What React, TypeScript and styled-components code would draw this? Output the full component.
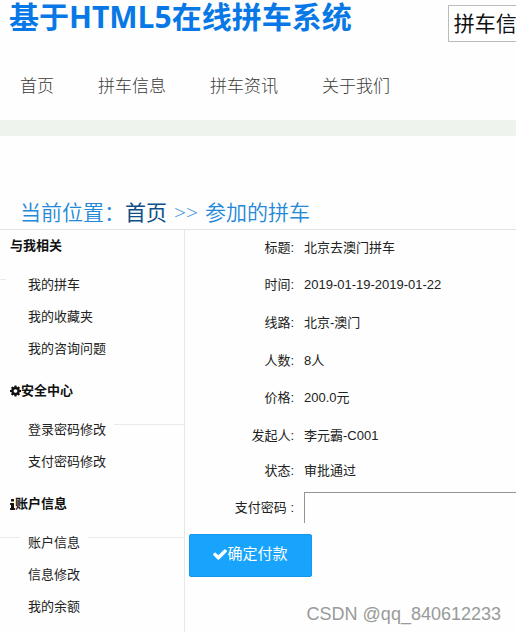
import React from "react";
import styled, { createGlobalStyle } from "styled-components";

const PAGE = "#fdfefd";

const GlobalStyle = createGlobalStyle`
  * { box-sizing: border-box; }
  body {
    margin: 0;
    background: ${PAGE};
    color: #222;
    font: 13px/20px "Liberation Sans", "Noto Sans CJK SC", sans-serif;
    overflow: hidden;
  }
  ul { list-style: none; margin: 0; padding: 0; }
  a { color: inherit; text-decoration: none; }
`;

const Page = styled.div`
  position: relative;
  min-height: 100vh;
  overflow: hidden;
  display: flex;
  flex-direction: column;
`;

const Header = styled.header`
  display: flex;
  align-items: flex-start;
  gap: 96px;
  height: 64px;
  padding-left: 9px;
`;

const Brand = styled.h1`
  flex: none;
  margin: 0;
  color: #0778e6;
  font: bold 30px/34px "Open Sans", "Noto Sans CJK SC", sans-serif;
`;

const SearchKind = styled.select`
  flex: none;
  appearance: none;
  height: 37px;
  margin-top: 5px;
  padding: 0 28px 0 5px;
  border: 1px solid #b9bdb9;
  border-radius: 0;
  background: #fff;
  color: #111;
  font: 21px/32px "Liberation Sans", "Noto Sans CJK SC", sans-serif;
`;

const Nav = styled.nav`
  display: flex;
  gap: 44px;
  height: 56px;
  padding: 10px 20px 0;
  color: #3a3a3a;
  font: 300 17px/26px "Liberation Sans", "Noto Sans CJK SC", sans-serif;
  white-space: nowrap;
`;

const Band = styled.div`
  height: 16px;
  background: #eef3ed;
`;

const Breadcrumb = styled.nav`
  display: flex;
  align-items: center;
  gap: 7px;
  margin-top: 62px;
  padding: 0 20px 2px;
  height: 32px;
  border-bottom: 1px solid #dfe5e2;
  color: #2488d8;
  font: 350 21px/29px "Open Sans", "Noto Sans CJK SC", sans-serif;
  white-space: nowrap;
`;

const Crumb = styled.a`
  color: #0d4f86;
  font-weight: 400;
`;

const Columns = styled.div`
  flex: 1;
  display: grid;
  grid-template-columns: 185px 1fr;
`;

const Sidebar = styled.aside`
  border-right: 1px solid #e6eae7;
`;

const Group = styled.section`
  padding-bottom: 10px;
`;

const GroupTitle = styled.h2`
  display: flex;
  align-items: center;
  height: 32px;
  margin: 0 0 7px;
  padding-left: 10px;
  color: #111;
  font-size: 13px;
  font-weight: bold;
`;

const MenuItem = styled.li<{ $rule?: string }>`
  height: 32px;
  padding-left: 20px;
  background: ${(p) => (p.$rule ? `${p.$rule} 0 10px / 100% 1px no-repeat` : "none")};
`;

const MenuLink = styled.a`
  display: inline-block;
  padding: 6px 8px;
  background: ${PAGE};
`;

const Main = styled.main`
  min-width: 0;
`;

const Details = styled.table`
  width: 100%;
  border-collapse: collapse;
`;

const Row = styled.tr<{ $height: number }>`
  height: ${(p) => p.$height}px;
`;

const Term = styled.th`
  width: 109px;
  padding: 0;
  font-weight: normal;
  text-align: right;
  white-space: nowrap;
`;

const Value = styled.td`
  padding: 0 0 0 10px;
`;

const Password = styled.input`
  display: block;
  width: 100%;
  height: 31px;
  padding: 0 6px;
  border: solid #8f9591;
  border-width: 1px 0 0 1px;
  background: transparent;
  font: inherit;
`;

const PayButton = styled.button`
  display: flex;
  align-items: center;
  justify-content: center;
  width: 123px;
  height: 43px;
  margin: 6px 0 0 4px;
  padding: 0 0 3px;
  border: 1px solid #1597ec;
  border-radius: 2px;
  background: #18a4fd;
  color: #fff;
  font: 15px/20px "Liberation Sans", "Noto Sans CJK SC", sans-serif;
`;

const Glyph = styled.svg`
  flex: none;
  fill: currentColor;
`;

const Watermark = styled.span`
  position: absolute;
  right: 15px;
  bottom: 8px;
  color: #989b99;
  font: 18px/22px "Liberation Sans", sans-serif;
`;

const CHECK =
  "M1671 566q0 40-28 68l-724 724-136 136q-28 28-68 28t-68-28l-136-136-362-362q-28-28-28-68t28-68l136-136q28-28 68-28t68 28l294 295 656-657q28-28 68-28t68 28l136 136q28 28 28 68z";
const COG =
  "M1152 896q0-106-75-181t-181-75-181 75-75 181 75 181 181 75 181-75 75-181zm512-109v222q0 12-8 23t-20 13l-185 28q-19 54-39 91 35 50 107 138 10 12 10 25t-9 23q-27 37-99 108t-94 71q-12 0-26-9l-138-108q-44 23-91 38-16 136-29 186-7 28-36 28h-222q-14 0-24.5-8.5t-11.5-21.5l-28-184q-49-16-90-37l-141 107q-10 9-25 9-14 0-25-11-126-114-165-168-7-10-7-23 0-12 8-23 15-21 51-66.5t54-70.5q-27-50-41-99l-183-27q-13-2-21-12.5t-8-23.5v-222q0-12 8-23t19-13l186-28q14-46 39-92-40-57-107-138-10-12-10-24 0-10 9-23 26-36 98.5-107.5t94.5-71.5q13 0 26 10l138 107q44-23 91-38 16-136 29-186 7-28 36-28h222q14 0 24.5 8.5t11.5 21.5l28 184q49 16 90 37l142-107q9-9 24-9 13 0 25 10 129 119 165 170 7 8 7 22 0 12-8 23-15 21-51 66.5t-54 70.5q26 50 41 98l183 28q13 2 21 12.5t8 23.5z";
const INFO =
  "M1216 1344v128q0 26-19 45t-45 19h-512q-26 0-45-19t-19-45v-128q0-26 19-45t45-19h64v-384h-64q-26 0-45-19t-19-45v-128q0-26 19-45t45-19h384q26 0 45 19t19 45v576h64q26 0 45 19t19 45zm-128-1152v192q0 26-19 45t-45 19h-256q-26 0-45-19t-19-45v-192q0-26 19-45t45-19h256q26 0 45 19t19 45z";

const groups = [
  {
    title: "与我相关",
    icon: null,
    rule: "linear-gradient(90deg, #e8ece9 6px, transparent 6px)",
    items: ["我的拼车", "我的收藏夹", "我的咨询问题"],
  },
  {
    title: "安全中心",
    icon: (
      <Glyph width="11" height="12" viewBox="128 128 1536 1536" aria-hidden="true">
        <path d={COG} />
      </Glyph>
    ),
    rule: "linear-gradient(90deg, transparent 60px, #e8ece9 60px)",
    items: ["登录密码修改", "支付密码修改"],
  },
  {
    title: "账户信息",
    icon: (
      <Glyph width="5" height="11" viewBox="576 128 640 1408" aria-hidden="true">
        <path d={INFO} />
      </Glyph>
    ),
    rule: "linear-gradient(#e8ece9, #e8ece9)",
    items: ["账户信息", "信息修改", "我的余额"],
  },
];

const details = [
  { term: "标题:", value: "北京去澳门拼车", height: 36 },
  { term: "时间:", value: "2019-01-19-2019-01-22", height: 38 },
  { term: "线路:", value: "北京-澳门", height: 38 },
  { term: "人数:", value: "8人", height: 37 },
  { term: "价格:", value: "200.0元", height: 38 },
  { term: "发起人:", value: "李元霸-C001", height: 37 },
  { term: "状态:", value: "审批通过", height: 33 },
];

export default function App() {
  return (
    <>
      <GlobalStyle />
      <Page>
        <Header>
          <Brand>基于HTML5在线拼车系统</Brand>
          <SearchKind aria-label="搜索类型" defaultValue="拼车信息">
            <option>拼车信息</option>
            <option>拼车资讯</option>
          </SearchKind>
        </Header>
        <Nav>
          {["首页", "拼车信息", "拼车资讯", "关于我们"].map((label) => (
            <a href="#" key={label}>{label}</a>
          ))}
        </Nav>
        <Band />
        <Breadcrumb>
          <span>
            当前位置：<Crumb href="#">首页</Crumb>
          </span>
          <span>&gt;&gt;</span>
          <span>参加的拼车</span>
        </Breadcrumb>
        <Columns>
          <Sidebar>
            {groups.map((group) => (
              <Group key={group.title}>
                <GroupTitle>
                  {group.icon}
                  {group.title}
                </GroupTitle>
                <ul>
                  {group.items.map((item, i) => (
                    <MenuItem key={item} $rule={i === 0 ? group.rule : undefined}>
                      <MenuLink href="#">{item}</MenuLink>
                    </MenuItem>
                  ))}
                </ul>
              </Group>
            ))}
          </Sidebar>
          <Main>
            <form onSubmit={(e) => e.preventDefault()}>
              <Details>
                <tbody>
                  {details.map((d) => (
                    <Row key={d.term} $height={d.height}>
                      <Term scope="row">{d.term}</Term>
                      <Value>{d.value}</Value>
                    </Row>
                  ))}
                  <Row $height={41}>
                    <Term scope="row">
                      <label htmlFor="pay-password">支付密码 :</label>
                    </Term>
                    <Value>
                      <Password id="pay-password" type="password" />
                    </Value>
                  </Row>
                </tbody>
              </Details>
              <PayButton type="submit">
                <Glyph width="14" height="11" viewBox="121 334 1550 1188" aria-hidden="true">
                  <path d={CHECK} />
                </Glyph>
                确定付款
              </PayButton>
            </form>
          </Main>
        </Columns>
        <Watermark>CSDN @qq_840612233</Watermark>
      </Page>
    </>
  );
}
